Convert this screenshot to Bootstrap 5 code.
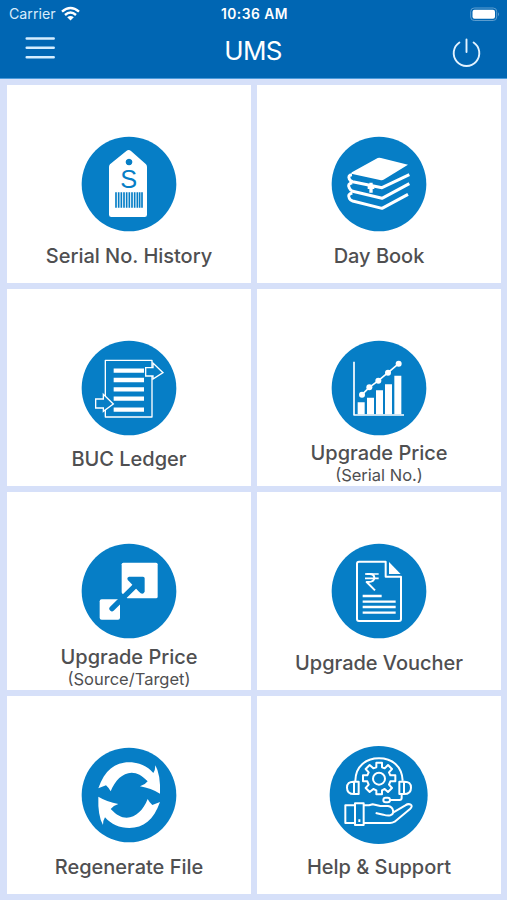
<!DOCTYPE html>
<html lang="en">
<head>
<meta charset="utf-8">
<meta name="viewport" content="width=device-width, initial-scale=1">
<title>UMS</title>
<link href="https://cdn.jsdelivr.net/npm/bootstrap@5.3.0/dist/css/bootstrap.min.css" rel="stylesheet">
<style>
body{background:#d6e0f9;font-family:Inter,"Liberation Sans",sans-serif;height:900px;overflow:hidden}
.top-bar{background:#0066b3;height:79px;border-bottom:1px solid #4c9bdb}
.status-row{height:28px;padding:0 7px 0 9px;display:grid;grid-template-columns:1fr auto 1fr;font-size:14px;line-height:28px}
.carrier{color:#d8ecfb;font-size:14.2px}
.clock{font-weight:600;font-size:13.8px;letter-spacing:.5px}
.title-row{height:50px;padding:0 26px 0 25px;display:grid;grid-template-columns:1fr auto 1fr}
.app-title{font-size:26px;line-height:45px;letter-spacing:-.7px}
.tiles{display:grid;grid-template-columns:1fr 1fr;grid-auto-rows:197.7px;gap:6px;padding:6px 6px 6px 7px}
.tile{background:#fff;padding-top:39px;color:#4f4f51}
.tile svg{width:120px;height:120px;display:block}
.tile-name{font-size:20px;line-height:24px;letter-spacing:-.02px;font-weight:500;margin-top:-.4px;white-space:nowrap}
.tile-name.has-note{margin-top:-6.6px}
.tile-note{font-size:16.5px;line-height:20px;white-space:nowrap}
.disc{fill:#067ec6}
.ln{fill:none;stroke:#fff;stroke-linejoin:round}
</style>
</head>
<body>
<header class="top-bar text-white">
  <div class="status-row">
    <div class="d-flex align-items-center carrier">Carrier
      <svg class="ms-1" width="21" height="16" viewBox="0 0 21 16" fill="none" stroke="#fff" stroke-width="2.4"><path d="M2 5.6Q10.5-1.8 19 5.6M5 9Q10.5 4 16 9"/><path d="M7.2 11.3Q10.5 8.6 13.800 11.3L10.500 14.600Z" fill="#fff" stroke="none"/></svg>
    </div>
    <div class="clock">10:36 AM</div>
    <div class="d-flex justify-content-end align-items-center">
      <svg width="30" height="15" viewBox="0 0 30 15"><rect x=".7" y="1" width="26" height="12.500" rx="3.500" fill="none" stroke="#5c9dcf"/><rect x="2.500" y="2.800" width="22.500" height="9" rx="2" fill="#fff"/><path d="M28 5.300q2 2 0 4z" fill="#5c9dcf"/></svg>
    </div>
  </div>
  <div class="title-row">
    <div><svg class="d-block" width="31" height="34" viewBox="0 0 31 34" stroke="#d4edff" stroke-width="2.500" stroke-linecap="round"><path d="M1.700 10.500H28.700M1.700 19.800H28.700M1.700 29.200H28.700"/></svg></div>
    <div class="app-title">UMS</div>
    <div class="d-flex justify-content-end"><svg width="29" height="40" viewBox="0 0 29 40" fill="none" stroke="#e3f3ff" stroke-width="1.900" stroke-linecap="round"><path d="M14.500 11.500V24M7.400 14.500A12.800 12.800 0 1 0 21.600 14.500"/></svg></div>
  </div>
</header>
<main class="tiles">
  <section class="tile d-flex flex-column align-items-center">
    <svg viewBox="-2 -2 360 360"><circle class="disc" cx="178" cy="178" r="142"/>
      <path fill="#fff" fill-rule="evenodd" d="M170 79Q177 73 184 79L229 119Q232 122 232 127V270Q232 277 225 277H125Q118 277 118 270V127Q118 122 121 119ZM178 102a10 10 0 1 0 .1 0Z"/>
      <text x="177" y="190" text-anchor="middle" font-family="Liberation Sans,sans-serif" font-size="76" fill="#067ec6">S</text>
      <path stroke="#067ec6" stroke-width="5" d="M139 203V249M147 203V249M155 203V249M163 203V249M171 203V249M179 203V249M187 203V249M195 203V249M203 203V249M210 203V249M217 203V249"/></svg>
    <div class="tile-name">Serial No. History</div>
  </section>
  <section class="tile d-flex flex-column align-items-center">
    <svg viewBox="-2 -2 360 360"><circle class="disc" cx="178" cy="178" r="142"/>
      <path fill="#fff" d="M174 100Q179 98 184 100L265 120L194 164Q188 168 181 166L98 148Q92 146 98 142Z"/>
      <g class="ln" stroke-width="9"><path d="M97 150Q84 151 89 163Q91 169 99 171L187 189L269 150"/><path d="M98 174Q82 177 89 190Q92 197 99 200L187 221L269 177"/><path d="M98 205Q82 209 89 221Q92 227 99 229L187 251L265 209"/><path d="M154 174V204M144 188H164" stroke-width="10"/></g></svg>
    <div class="tile-name">Day Book</div>
  </section>
  <section class="tile d-flex flex-column align-items-center">
    <svg viewBox="-2 -2 360 360"><circle class="disc" cx="178" cy="178" r="142"/>
      <rect x="107" y="95" width="140" height="170" class="ln" stroke-width="4"/>
      <path stroke="#fff" stroke-width="13" d="M132 126H223M132 154H223M132 182H223M132 210H223M132 243H223"/>
      <g fill="#067ec6" stroke="#fff" stroke-width="4"><path d="M228 117H250V103L280 132L250 151V142H228Z"/><path d="M78 211H101V197L131 226L101 248V238H78Z"/></g></svg>
    <div class="tile-name">BUC Ledger</div>
  </section>
  <section class="tile d-flex flex-column align-items-center">
    <svg viewBox="-2 -2 360 360"><circle class="disc" cx="178" cy="178" r="142"/>
      <g class="ln" stroke-width="5"><path d="M103 99V259H253M127 198L149 176L176 156L205 132L237 105"/></g>
      <path fill="#fff" d="M114 221H135V257H114ZM142 207H163V257H142ZM169 185H190V257H169ZM196 167H217V257H196ZM224 141H245V257H224Z"/>
      <g fill="#fff"><circle cx="127" cy="198" r="9"/><circle cx="149" cy="176" r="9"/><circle cx="176" cy="156" r="9"/><circle cx="205" cy="132" r="9"/><circle cx="237" cy="105" r="9"/></g></svg>
    <div class="tile-name has-note">Upgrade Price</div>
    <div class="tile-note">(Serial No.)</div>
  </section>
  <section class="tile d-flex flex-column align-items-center">
    <svg viewBox="-2 -2 360 360"><circle class="disc" cx="178" cy="178" r="142"/>
      <rect x="156" y="93" width="108" height="107" rx="5" fill="#fff"/><path class="disc" d="M154 182L174 202H154Z"/><rect x="90" y="203" width="61" height="61" rx="6" fill="#fff"/>
      <path d="M127 231L204 155" stroke="#067ec6" stroke-width="16" stroke-linecap="round"/><path class="disc" d="M178 135H220Q225 135 225 140V180Q219 192 208 180L178 149Q168 139 178 135Z"/></svg>
    <div class="tile-name has-note">Upgrade Price</div>
    <div class="tile-note">(Source/Target)</div>
  </section>
  <section class="tile d-flex flex-column align-items-center">
    <svg viewBox="-2 -2 360 360"><circle class="disc" cx="178" cy="178" r="142"/>
      <path class="ln" stroke-width="6" d="M118 90H198V135H244V262Q244 268 238 268H118Q112 268 112 262V96Q112 90 118 90Z"/>
      <path fill="#fff" d="M208 91L243 127H208Z"/>
      <g class="ln" stroke-width="7"><path d="M136 127H177M136 140H177" stroke-width="5"/><path d="M140 127H150Q164 127 164 139Q163 151 146 151H141L166 176" stroke-width="6"/><path d="M129 193H186M129 210H228M129 226H228M129 243H228"/></g></svg>
    <div class="tile-name">Upgrade Voucher</div>
  </section>
  <section class="tile d-flex flex-column align-items-center">
    <svg viewBox="-2 -2 360 360"><circle class="disc" cx="178" cy="178" r="142"/>
      <path id="sweep" fill="#fff" d="M86 158C105 104 136 80 178 80C207 80 233 91 251 112Q257 103 257 89Q273 116 271 174Q244 158 211 152Q226 148 234 137C216 119 203 111 186 111C158 112 136 134 123 167Q118 157 109 149Z"/>
      <use href="#sweep" transform="rotate(180 178.500 178.500)"/></svg>
    <div class="tile-name">Regenerate File</div>
  </section>
  <section class="tile d-flex flex-column align-items-center">
    <svg viewBox="-2 -2 360 360"><circle class="disc" cx="177" cy="178" r="147"/>
      <g class="ln" stroke-width="6">
        <path d="M107 135C108 91 139 68 178 68S247 91 249 135M103 138H117V175H103ZM103 138Q82 137 82 156T103 175M239 138H253V175H239ZM253 138Q274 137 274 156T253 175M246 175V187Q246 193 239 193H211"/><rect x="191" y="186" width="20" height="14" rx="7"/>
        <circle cx="178" cy="129" r="18"/>
        <path d="M170 81H187V95L195 98L205 88L217 100L208 110L212 119H227V137H212L208 147L217 157L205 169L195 160L187 164V176H170V164L161 160L150 169L138 157L147 147L143 137H130V119H143L147 110L138 100L150 88L161 98L170 95Z"/>
        <path d="M106 209H77V262H106M106 203H132V268H106ZM132 209H148L159 206L182 211H205Q218 213 220 224Q223 236 212 239Q203 241 191 237L168 232M132 262H211Q218 262 225 258L271 220Q280 211 273 207Q266 203 257 209L220 231M119 251V259"/>
      </g></svg>
    <div class="tile-name">Help &amp; Support</div>
  </section>
</main>
<script src="https://cdn.jsdelivr.net/npm/bootstrap@5.3.0/dist/js/bootstrap.bundle.min.js"></script>
</body>
</html>
